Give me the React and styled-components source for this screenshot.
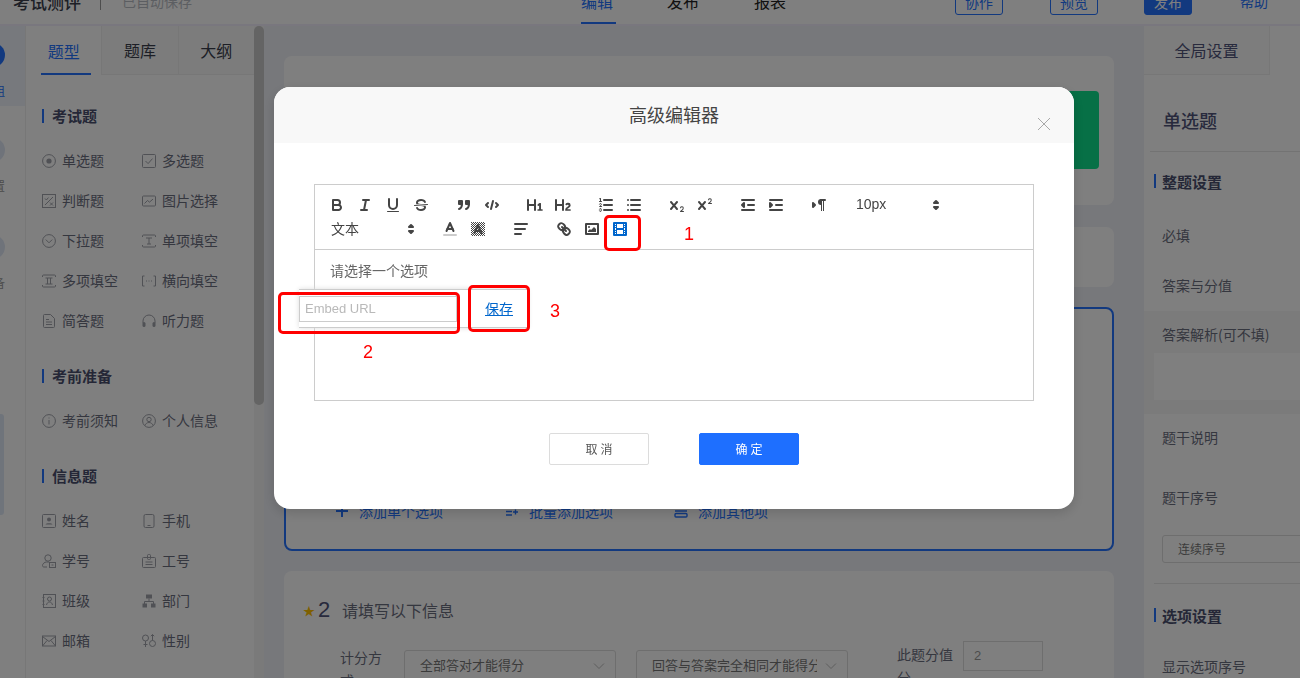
import React from 'react'
import styled, { createGlobalStyle } from 'styled-components'

const GlobalStyle = createGlobalStyle`
  html, body { margin: 0; padding: 0; height: 100%; overflow: hidden; background: #fff; }
  body { font-family: "Noto Sans CJK SC", "Liberation Sans", sans-serif; color: #333; }
  * { box-sizing: border-box; }
`

const CJK = `"Liberation Sans", "Noto Sans CJK SC", sans-serif`
const BLUE = '#2473ff'

const Page = styled.div`
  width: 1300px;
  height: 678px;
  overflow: hidden;
  display: flex;
  flex-direction: column;
`

/* the page is scrolled a bit: the header is cut by the top of the window */
const Header = styled.header`
  flex: none;
  height: 26px;
  border-bottom: 2px solid #f2eefc;
  background: #fff;
  overflow: hidden;
`
const HeaderInner = styled.div`
  margin-top: -18px;
  height: 42px;
  padding-left: 13px;
  display: flex;
  align-items: center;
`
const AppTitle = styled.div`
  font-size: 17px;
  font-weight: 500;
  color: #3b3f4d;
  width: 87px;
  padding-bottom: 4px;
`
const HeaderSep = styled.div`
  width: 1px;
  height: 18px;
  margin-bottom: 4px;
  background: #9a9a9a;
`
const Saved = styled.div`
  margin-left: 21px;
  font-size: 14px;
  color: #b9bcc4;
  width: 459px;
  padding-bottom: 4px;
`
const HeaderTab = styled.div`
  height: 42px;
  width: ${p => p.$w}px;
  font-size: 16px;
  color: ${p => (p.$active ? BLUE : '#222')};
  div {
    width: 35px;
    height: 42px;
    line-height: 38px;
    border-bottom: ${p => (p.$active ? `2px solid ${BLUE}` : 'none')};
  }
`
const HeaderActions = styled.div`
  display: flex;
  align-items: flex-start;
  height: 42px;
`
const HeadBtn = styled.div`
  width: 48px;
  height: 33px;
  margin-right: ${p => p.$mr}px;
  border: 1px solid ${BLUE};
  border-radius: 3px;
  background: ${p => (p.$primary ? BLUE : '#fff')};
  color: ${p => (p.$primary ? '#fff' : BLUE)};
  font-size: 14px;
  text-align: center;
  line-height: 38px;
`
const HelpLink = styled.div`
  font-size: 14px;
  line-height: 38px;
  color: ${BLUE};
`

const Main = styled.div`
  flex: 1;
  min-height: 0;
  display: flex;
`

const Rail = styled.aside`
  flex: none;
  width: 26px;
  overflow: hidden;
  background: #fff;
  border-right: 1px solid #eee;
  position: relative;
`
const RailItem = styled.div`
  width: 26px;
  height: ${p => p.$h}px;
  background: ${p => (p.$active ? '#eef3fb' : 'transparent')};
  overflow: hidden;
`
const RailInner = styled.div`
  width: 68px;
  margin-left: -41px;
  padding-top: ${p => p.$pt}px;
  display: flex;
  flex-direction: column;
  align-items: center;
  gap: 16px;
`
const RailCircle = styled.div`
  width: 24px;
  height: 24px;
  border-radius: 50%;
  flex: none;
  background: ${p => (p.$active ? BLUE : '#dfe7f5')};
`
const RailLabel = styled.div`
  font-size: 12px;
  line-height: 16px;
  color: ${p => (p.$active ? BLUE : '#999')};
`
const RailStub = styled.div`
  position: absolute;
  left: 0;
  top: 388px;
  width: 4px;
  height: 101px;
  background: #dfe9f7;
  border-radius: 0 3px 3px 0;
`

const LeftPanel = styled.aside`
  flex: none;
  width: 238px;
  display: flex;
  background: #fff;
`
const LeftCol = styled.div`
  width: 228px;
`
const TabBar = styled.div`
  display: flex;
  height: 49px;
  background: #f9f9f9;
`
const LeftTab = styled.div`
  flex: 1;
  height: 49px;
  display: flex;
  align-items: center;
  justify-content: center;
  font-size: 16px;
  background: ${p => (p.$active ? '#fff' : '#f9f9f9')};
  color: ${p => (p.$active ? BLUE : '#3b3f4d')};
  border-right: 1px solid #eee;
  border-bottom: ${p => (p.$active ? 'none' : '1px solid #eee')};
  position: relative;
  &:last-child { border-right: none; }
  &::after {
    content: '';
    display: ${p => (p.$active ? 'block' : 'none')};
    position: absolute;
    left: 15px;
    right: 10px;
    bottom: 0;
    height: 2px;
    background: ${BLUE};
  }
`
const LeftBody = styled.div`
  padding: 31px 0 0 16px;
`
const SectionHead = styled.div`
  height: 20px;
  display: flex;
  align-items: center;
  font-size: 15px;
  font-weight: 700;
  color: #4a4f6e;
  margin: ${p => p.$m || '0'};
  &::before {
    content: '';
    width: 2px;
    height: 14px;
    background: ${BLUE};
    margin-right: 8px;
  }
  span { padding-bottom: 2px; }
`
const ItemGrid = styled.div`
  display: grid;
  grid-template-columns: 100px 100px;
  grid-auto-rows: 40px;
  margin: 15px 0 25px;
`
const Item = styled.div`
  display: flex;
  align-items: center;
  gap: 6px;
  font-size: 14px;
  color: #6b6e7e;
  svg { flex: none; color: #a0a2aa; }
  span { padding-bottom: 2px; }
`
const ScrollTrack = styled.div`
  width: 10px;
  background: #f4f4f4;
`
const ScrollThumb = styled.div`
  width: 10px;
  height: 379px;
  border-radius: 5px;
  background: #c8c8c8;
`

const Canvas = styled.main`
  flex: none;
  width: 880px;
  background: #eff1f7;
  padding: 30px 30px 0 20px;
  display: flex;
  flex-direction: column;
  overflow: hidden;
`
const Card = styled.section`
  flex: none;
  width: 830px;
  height: ${p => p.$h}px;
  margin-bottom: ${p => p.$mb}px;
  background: #fff;
  border-radius: 8px;
  position: relative;
`
const GreenTab = styled.div`
  position: absolute;
  right: 15px;
  top: 35px;
  width: 60px;
  height: 78px;
  border-radius: 4px;
  background: #0ee08c;
`
const ActiveCard = styled(Card)`
  border: 2px solid ${BLUE};
  display: flex;
  flex-direction: column;
  justify-content: flex-end;
  padding: 0 0 28px 49px;
`
const AddRow = styled.div`
  display: flex;
  align-items: center;
  height: 20px;
`
const AddAction = styled.div`
  width: ${p => p.$w}px;
  display: flex;
  align-items: center;
  gap: ${p => p.$gap}px;
  font-size: 14px;
  color: ${BLUE};
  svg { flex: none; }
`
const QuestionCard = styled(Card)`
  padding: 28px 0 0 19px;
`
const QuestionTitle = styled.div`
  display: flex;
  align-items: center;
  height: 24px;
  padding-bottom: 2px;
  font-size: 16px;
  color: #6b6e7e;
`
const Star = styled.span`
  color: #ffc000;
  font-size: 12px;
  width: 15px;
`
const QuestionNo = styled.span`
  font-family: ${CJK};
  font-size: 22px;
  color: #50547a;
  width: 24px;
`
const ScoreRow = styled.div`
  margin-top: 27px;
  padding-left: 37px;
  display: flex;
  align-items: flex-start;
`
const ScoreLabel = styled.div`
  width: ${p => p.$w}px;
  margin-right: ${p => p.$mr || 0}px;
  margin-left: ${p => p.$ml || 0}px;
  margin-top: ${p => p.$mt || 0}px;
  font-size: 14px;
  line-height: 23px;
  color: #6b6e7e;
`
const FakeSelect = styled.div`
  width: 212px;
  height: 32px;
  margin-right: 20px;
  border: 1px solid #dcdcdc;
  border-radius: 3px;
  display: flex;
  align-items: center;
  justify-content: space-between;
  padding: 0 10px 0 15px;
  font-size: 13px;
  color: #777;
  span {
    width: 165px;
    padding-bottom: 4px;
    overflow: hidden;
    white-space: nowrap;
  }
  svg { flex: none; color: #bbb; }
`
const ScoreField = styled.div`
  width: 80px;
  height: 30px;
  margin-left: 6px;
  margin-top: -9px;
  border: 1px solid #dcdcdc;
  padding: 0 10px;
  font-family: ${CJK};
  font-size: 13px;
  line-height: 28px;
  color: #999;
`

const RightPanel = styled.aside`
  flex: none;
  width: 156px;
  background: #fff;
  overflow: hidden;
`
const RightTab = styled.div`
  width: 126px;
  height: 49px;
  background: #fafafa;
  border-right: 1px solid #eee;
  border-bottom: 1px solid #eee;
  font-size: 16px;
  color: #50547a;
  display: flex;
  align-items: center;
  justify-content: center;
`
const RightTitle = styled.div`
  height: 77px;
  margin-left: 6px;
  padding: 14px 0 0 13px;
  display: flex;
  align-items: center;
  border-bottom: 1px solid #e6e6e6;
  font-size: 18px;
  font-weight: 500;
  color: #50547a;
`
const RightHead = styled(SectionHead)`
  margin: ${p => p.$m};
  padding-left: 10px;
  &::before { margin-right: 6px; }
`
const SettingRow = styled.div`
  height: ${p => p.$h}px;
  margin-top: ${p => p.$mt || 0}px;
  padding: 0 0 2px 18px;
  display: flex;
  align-items: center;
  font-size: 14px;
  color: #6b6e7e;
  white-space: nowrap;
`
const Highlight = styled.div`
  height: 103px;
  background: #f7f7f7;
  padding-top: 12px;
`
const HighlightField = styled.div`
  height: 47px;
  margin: 6px 0 0 10px;
  background: #fff;
`
const NumberSelect = styled.div`
  margin: 13px 0 0 18px;
  width: 170px;
  height: 28px;
  border: 1px solid #dcdcdc;
  border-radius: 3px;
  padding-left: 15px;
  font-size: 12px;
  line-height: 26px;
  color: #777;
`
const RightDivider = styled.div`
  height: 1px;
  margin: 20px 0 0 10px;
  background: #e6e6e6;
`

const Overlay = styled.div`
  position: fixed;
  inset: 0;
  background: rgba(0, 0, 0, 0.5);
  padding: 87px 0 0 274px;
`
const Modal = styled.div`
  width: 800px;
  height: 422px;
  background: #fff;
  border-radius: 16px;
  overflow: hidden;
  box-shadow: 0 4px 12px rgba(0, 0, 0, 0.15);
`
const ModalHeader = styled.div`
  height: 56px;
  padding-bottom: 2px;
  background: #f8f8f8;
  display: flex;
  align-items: center;
  justify-content: center;
  font-size: 18px;
  color: #444;
  position: relative;
`
const CloseBtn = styled.div`
  position: absolute;
  right: 22px;
  top: 24px;
  width: 16px;
  height: 16px;
  color: #a8a8a8;
`
const ModalBody = styled.div`
  padding: 41px 40px 0;
`
const Editor = styled.div`
  height: 217px;
  border: 1px solid #ccc;
  position: relative;
`
const Toolbar = styled.div`
  height: 65px;
  padding: 8px;
  display: flex;
  flex-wrap: wrap;
  align-content: flex-start;
  border-bottom: 1px solid #ccc;
`
const ToolGroup = styled.div`
  display: flex;
  margin-right: 15px;
`
const ToolBtn = styled.div`
  width: 28px;
  height: 24px;
  padding: 3px 5px;
  svg { display: block; }
`
const Picker = styled.div`
  width: 98px;
  height: 24px;
  padding-left: 8px;
  display: flex;
  align-items: center;
  justify-content: space-between;
  font-size: 14px;
  color: #444;
  font-family: ${CJK};
  span { padding-bottom: 2px; }
  svg { margin-right: 1px; }
`
const QlSvg = styled.svg`
  width: 18px;
  height: 18px;
  color: ${p => (p.$active ? '#06c' : '#444')};
  .s { fill: none; stroke: currentColor; stroke-width: 2; stroke-linecap: round; stroke-linejoin: round; }
  .t { fill: none; stroke: currentColor; stroke-width: 1; stroke-linecap: round; stroke-linejoin: round; }
  .f { fill: currentColor; }
`
const EditorText = styled.div`
  padding: 9px 15px;
  font-size: 14px;
  line-height: 22px;
  color: #666;
`
const LinkTooltip = styled.div`
  position: absolute;
  left: -16px;
  top: 104px;
  width: 229px;
  height: 39px;
  background: #fff;
  border-top: 1px solid #ccc;
  border-bottom: 1px solid #ccc;
  display: flex;
  align-items: center;
  box-shadow: 0 0 5px #ddd;
`
const UrlInput = styled.input`
  width: 158px;
  height: 26px;
  border: 1px solid #ccc;
  padding: 0 5px;
  outline: none;
  font-family: "Liberation Sans", sans-serif;
  font-size: 13px;
  &::placeholder { color: #b9b9b9; }
`
const SaveLink = styled.a`
  margin-left: 28px;
  margin-bottom: 2px;
  white-space: nowrap;
  font-size: 14px;
  line-height: 20px;
  color: #06c;
  text-decoration: underline;
`
const ModalFooter = styled.div`
  margin-top: 32px;
  display: flex;
  justify-content: center;
  gap: 50px;
`
const FootBtn = styled.button`
  width: 100px;
  height: 32px;
  border: 1px solid ${p => (p.$primary ? '#1e6fff' : '#dcdcdc')};
  border-radius: 2px;
  background: ${p => (p.$primary ? '#1e6fff' : '#fff')};
  color: ${p => (p.$primary ? '#fff' : '#555')};
  font-family: inherit;
  font-size: 12px;
  letter-spacing: 3px;
  padding: 0 0 2px 3px;
`
const Marker = styled.div`
  position: absolute;
  left: ${p => p.$x}px;
  top: ${p => p.$y}px;
  width: ${p => p.$w}px;
  height: ${p => p.$h}px;
  border: 3px solid #f00;
  border-radius: 5px;
`
const MarkerNo = styled.div`
  position: absolute;
  left: ${p => p.$x}px;
  top: ${p => p.$y}px;
  font-family: "Liberation Sans", sans-serif;
  font-size: 18px;
  line-height: 20px;
  color: #f00;
`

const Icon14 = ({ children }) => (
  <svg width="14" height="14" viewBox="0 0 14 14" fill="none" stroke="currentColor" strokeWidth="1">
    {children}
  </svg>
)

const listIcons = {
  radio: <><circle cx="7" cy="7" r="6.4" /><circle cx="7" cy="7" r="2.6" fill="currentColor" stroke="none" /></>,
  check: <><rect x=".5" y=".5" width="13" height="13" rx="1" /><path d="M3.5 7l2.6 2.6 4.4-5" /></>,
  judge: <><rect x=".5" y=".5" width="13" height="13" /><path d="M3 11L11 3M3 4.5l1.4 1.5 2-2.4M8 8.5l3 3M11 8.5l-3 3" /></>,
  image: <><rect x=".5" y="2" width="13" height="10" rx="1" /><path d="M2.5 9.5l3-3 2 1.6 3.5-3" /></>,
  drop: <><circle cx="7" cy="7" r="6.4" /><path d="M3.8 5.6L7 8.8l3.2-3.2" /></>,
  single: <path d="M.5 3V2a1 1 0 0 1 1-1h11a1 1 0 0 1 1 1v1M.5 11v1a1 1 0 0 0 1 1h11a1 1 0 0 0 1-1v-1M4 4h6M7 4v6M5 10h4" />,
  multi: <path d="M.5 3V2a1 1 0 0 1 1-1h11a1 1 0 0 1 1 1v1M.5 11v1a1 1 0 0 0 1 1h11a1 1 0 0 0 1-1v-1M3.5 4h7M5.5 4v6M8.5 4v6M3.5 10h7" />,
  inline: <path d="M2.5 2H.5v10h2M11.5 2h2v10h-2M4 7h1M6.5 7h1M9 7h1" />,
  doc: <><path d="M1.5 1.5a1 1 0 0 1 1-1H8.5l4 4v8a1 1 0 0 1-1 1h-9a1 1 0 0 1-1-1z" /><path d="M4 5.5h3M4 8h6M4 10.5h6" /></>,
  audio: <><path d="M1 9V7a6 6 0 0 1 12 0v2" /><rect x=".5" y="8" width="3" height="5" rx="1.5" fill="currentColor" stroke="none" /><rect x="10.5" y="8" width="3" height="5" rx="1.5" fill="currentColor" stroke="none" /></>,
  info: <><circle cx="7" cy="7" r="6.4" /><path d="M7 6v4.500M7 3.5v1" /></>,
  person: <><circle cx="7" cy="7" r="6.4" /><circle cx="7" cy="5.5" r="2.2" /><path d="M3 11.5c.6-2 2.2-3 4-3s3.400 1 4 3" /></>,
  name: <><rect x=".5" y=".5" width="13" height="13" rx="1" /><circle cx="7" cy="5.5" r="2" fill="currentColor" stroke="none" /><path d="M3.5 10.5c.3-1.800 6.700-1.800 7 0z" fill="currentColor" stroke="none" /></>,
  phone: <><rect x="2" y=".5" width="10" height="13" rx="1.5" /><path d="M5.5 11.5h3" /></>,
  student: <><circle cx="6" cy="4" r="3.2" /><path d="M7 8H4.5C2.5 8 .5 9.800.5 11.500c0 1 .6 1.500 1.500 1.500h3" /><rect x="7.5" y="8.5" width="6" height="5" /><path d="M9.5 11h2" /></>,
  staff: <><rect x=".5" y="3.5" width="13" height="10" rx="1" /><rect x="5.5" y=".5" width="3" height="5" rx="1" /><path d="M3.5 8h7M3.5 10.5h7" /></>,
  cls: <><rect x="1.5" y=".5" width="12" height="13" /><circle cx="7.5" cy="5" r="2" /><path d="M4.5 11c.5-2 1.500-3 3-3s2.500 1 3 3M.5 3.500h2M.5 7h2M.5 10.500h2" /></>,
  dept: <><path d="M4 .5h6v4H4z" fill="currentColor" stroke="none" /><path d="M7 4.500V7M2.500 10V7.500h9V10" /><path d="M.5 9.500h4.500v4H.5zM9 9.500h4.500v4H9z" fill="currentColor" stroke="none" /></>,
  mail: <><rect x=".5" y="2" width="13" height="10" /><path d="M.5 2.500L7 7.500l6.500-5M.5 12l4.500-5.500M13.500 12L9 6.500" /></>,
  gender: <><circle cx="3.5" cy="4" r="3" /><path d="M3.500 7v6M1.500 10.500h4" /><circle cx="10.5" cy="9.5" r="3" /><path d="M10.500 6.500V.5M8.800 2.200L10.500.5l1.700 1.700" /></>,
}

const sections = [
  {
    title: '考试题',
    items: [
      ['radio', '单选题'], ['check', '多选题'], ['judge', '判断题'], ['image', '图片选择'], ['drop', '下拉题'],
      ['single', '单项填空'], ['multi', '多项填空'], ['inline', '横向填空'], ['doc', '简答题'], ['audio', '听力题'],
    ],
  },
  { title: '考前准备', items: [['info', '考前须知'], ['person', '个人信息']] },
  {
    title: '信息题',
    items: [
      ['name', '姓名'], ['phone', '手机'], ['student', '学号'], ['staff', '工号'],
      ['cls', '班级'], ['dept', '部门'], ['mail', '邮箱'], ['gender', '性别'],
    ],
  },
]

// toolbar drawings, 18x18 grid
const toolIcons = {
  bold: <><path className="s" d="M5,4H9.5A2.5,2.5,0,0,1,12,6.5v0A2.5,2.5,0,0,1,9.5,9H5A0,0,0,0,1,5,9V4A0,0,0,0,1,5,4Z" /><path className="s" d="M5,9h5.5A2.5,2.5,0,0,1,13,11.5v0A2.5,2.5,0,0,1,10.5,14H5a0,0,0,0,1,0,0V9A0,0,0,0,1,5,9Z" /></>,
  italic: <><line className="s" x1="7" x2="13" y1="4" y2="4" /><line className="s" x1="5" x2="11" y1="14" y2="14" /><line className="s" x1="8" x2="10" y1="14" y2="4" /></>,
  underline: <><path className="s" d="M5,3V9a4.012,4.012,0,0,0,4,4H9a4.012,4.012,0,0,0,4-4V3" /><rect className="f" height="1" rx=".5" ry=".5" width="12" x="3" y="15" /></>,
  strike: <><line className="t" x1="15.5" x2="2.5" y1="8.5" y2="9.5" /><path className="f" d="M9.007,8C6.542,7.791,6,7.519,6,6.5,6,5.792,7.283,5,9,5c1.571,0,2.765.679,2.969,1.309a1,1,0,0,0,1.9-.617C13.356,4.106,11.354,3,9,3,6.2,3,4,4.538,4,6.5a3.2,3.2,0,0,0,.5,1.843Z" /><path className="f" d="M8.984,10C11.457,10.208,12,10.479,12,11.5c0,.708-1.283,1.5-3,1.5-1.571,0-2.765-.679-2.969-1.309a1,1,0,1,0-1.9.617C4.644,13.894,6.646,15,9,15c2.8,0,5-1.538,5-3.5a3.2,3.2,0,0,0-.5-1.843Z" /></>,
  quote: <><rect className="f s" height="3" width="3" x="4" y="5" /><rect className="f s" height="3" width="3" x="11" y="5" /><path className="s" d="M7,8c0,4.031-3,5-3,5" /><path className="s" d="M14,8c0,4.031-3,5-3,5" /></>,
  code: <><polyline className="s" points="5 7 3 9 5 11" /><polyline className="s" points="13 7 15 9 13 11" /><line className="s" x1="10" x2="8" y1="5" y2="13" /></>,
  h1: <path className="f" d="M10,4V14a1,1,0,0,1-2,0V10H3v4a1,1,0,0,1-2,0V4A1,1,0,0,1,3,4V8H8V4a1,1,0,0,1,2,0Zm6.06787,9.209H14.98975V7.59863a.54085.54085,0,0,0-.605-.60547h-.62744a1.01119,1.01119,0,0,0-.748.29688L11.645,8.56641a.5435.5435,0,0,0-.022.8584l.28613.30762a.53861.53861,0,0,0,.84717.0332l.09912-.08789a1.2137,1.2137,0,0,0,.2417-.35254h.02246s-.01123.30859-.01123.60547V13.209H12.041a.54085.54085,0,0,0-.605.60547v.43945a.54085.54085,0,0,0,.605.60547h4.02686a.54085.54085,0,0,0,.605-.60547v-.43945A.54085.54085,0,0,0,16.06787,13.209Z" />,
  h2: <path className="f" d="M16.73975,13.81445v.43945a.54085.54085,0,0,1-.605.60547H11.855a.58392.58392,0,0,1-.64893-.60547V14.0127c0-2.90527,3.39941-3.42187,3.39941-4.55469a.77675.77675,0,0,0-.84717-.78125,1.17684,1.17684,0,0,0-.83594.38477c-.2749.26367-.561.374-.85791.13184l-.4292-.34082c-.30811-.24219-.38525-.51758-.1543-.81445a2.97155,2.97155,0,0,1,2.45361-1.17676,2.45393,2.45393,0,0,1,2.68408,2.40918c0,2.45312-3.1792,2.92676-3.27832,3.93848h2.79443A.54085.54085,0,0,1,16.73975,13.81445ZM9,3A.99974.99974,0,0,0,8,4V8H3V4A1,1,0,0,0,1,4V14a1,1,0,0,0,2,0V10H8v4a1,1,0,0,0,2,0V4A.99974.99974,0,0,0,9,3Z" />,
  ol: <><line className="s" x1="7" x2="15" y1="4" y2="4" /><line className="s" x1="7" x2="15" y1="9" y2="9" /><line className="s" x1="7" x2="15" y1="14" y2="14" /><line className="t" x1="2.5" x2="4.5" y1="5.5" y2="5.5" /><path className="f" d="M3.5,6A0.5,0.5,0,0,1,3,5.5V3.085l-0.276.138A0.5,0.5,0,0,1,2.053,3c-0.124-.247-0.023-0.324.224-0.447l1-.5A0.5,0.5,0,0,1,4,2.5v3A0.5,0.5,0,0,1,3.5,6Z" /><path className="t" d="M4.5,10.5h-2c0-.234,1.85-1.076,1.85-2.234A0.959,0.959,0,0,0,2.5,8.156" /><path className="t" d="M2.5,14.846a0.959,0.959,0,0,0,1.85-.109A0.7,0.7,0,0,0,3.75,14a0.688,0.688,0,0,0,.6-0.736,0.959,0.959,0,0,0-1.85-.109" /></>,
  ul: <><line className="s" x1="6" x2="15" y1="4" y2="4" /><line className="s" x1="6" x2="15" y1="9" y2="9" /><line className="s" x1="6" x2="15" y1="14" y2="14" /><line className="s" x1="3" x2="3" y1="4" y2="4" /><line className="s" x1="3" x2="3" y1="9" y2="9" /><line className="s" x1="3" x2="3" y1="14" y2="14" /></>,
  sub: <><path className="f" d="M15.5,15H13.861a3.858,3.858,0,0,0,1.914-2.975,1.8,1.8,0,0,0-1.6-1.751A1.921,1.921,0,0,0,12.021,11.7a0.50013,0.50013,0,1,0,.957.291h0a0.914,0.914,0,0,1,1.053-.725,0.81,0.81,0,0,1,.744.762c0,1.076-1.16971,1.86982-1.93971,2.43082A1.45639,1.45639,0,0,0,12,15.5a0.5,0.5,0,0,0,.5.5h3A0.5,0.5,0,0,0,15.5,15Z" /><path className="f" d="M9.65,5.241a1,1,0,0,0-1.409.108L6,7.964,3.759,5.349A1,1,0,0,0,2.192,6.59178Q2.21541,6.6213,2.241,6.649L4.684,9.5,2.241,12.35A1,1,0,0,0,3.71,13.70722q0.02557-.02768.049-0.05722L6,11.036,8.241,13.65a1,1,0,1,0,1.567-1.24277Q9.78459,12.3777,9.759,12.35L7.316,9.5,9.759,6.651A1,1,0,0,0,9.65,5.241Z" /></>,
  sup: <><path className="f" d="M15.5,7H13.861a4.015,4.015,0,0,0,1.914-2.975,1.8,1.8,0,0,0-1.6-1.751A1.922,1.922,0,0,0,12.021,3.7a0.5,0.5,0,1,0,.957.291,0.917,0.917,0,0,1,1.053-.725,0.81,0.81,0,0,1,.744.762c0,1.077-1.164,1.925-1.934,2.486A1.423,1.423,0,0,0,12,7.5a0.5,0.5,0,0,0,.5.5h3A0.5,0.5,0,0,0,15.5,7Z" /><path className="f" d="M9.651,5.241a1,1,0,0,0-1.41.108L6,7.964,3.759,5.349a1,1,0,1,0-1.519,1.3L4.683,9.5,2.241,12.35a1,1,0,1,0,1.519,1.3L6,11.036,8.241,13.65a1,1,0,0,0,1.519-1.3L7.317,9.5,9.759,6.651A1,1,0,0,0,9.651,5.241Z" /></>,
  outdent: <><line className="s" x1="3" x2="15" y1="14" y2="14" /><line className="s" x1="3" x2="15" y1="4" y2="4" /><line className="s" x1="9" x2="15" y1="9" y2="9" /><polyline className="f s" points="5 7 5 11 3 9 5 7" /></>,
  indent: <><line className="s" x1="3" x2="15" y1="14" y2="14" /><line className="s" x1="3" x2="15" y1="4" y2="4" /><line className="s" x1="9" x2="15" y1="9" y2="9" /><polyline className="f s" points="3 7 3 11 5 9 3 7" /></>,
  dir: <><polygon className="f s" points="3 11 5 9 3 7 3 11" /><line className="s" x1="15" x2="11" y1="4" y2="4" /><path className="f" d="M11,3a3,3,0,0,0,0,6h1V3H11Z" /><rect className="f" height="11" width="1" x="11" y="4" /><rect className="f" height="11" width="1" x="13" y="4" /></>,
  color: <><line x1="3" x2="15" y1="15" y2="15" stroke="#ccc" strokeWidth="2" strokeLinecap="round" /><polyline className="s" points="5.5 11 9 3 12.5 11" /><line className="s" x1="11.63" x2="6.38" y1="9" y2="9" /></>,
  background: <><defs><pattern id="dither" width="2" height="2" patternUnits="userSpaceOnUse"><rect width="1" height="1" fill="#444" /><rect x="1" y="1" width="1" height="1" fill="#444" /></pattern></defs><rect x="2" y="2" width="14" height="14" fill="url(#dither)" /><polyline className="s" points="5.5 13 9 5 12.5 13" /><line className="s" x1="11.63" x2="6.38" y1="11" y2="11" /></>,
  align: <><line className="s" x1="3" x2="15" y1="4" y2="4" /><line className="s" x1="3" x2="13" y1="9" y2="9" /><line className="s" x1="3" x2="9" y1="14" y2="14" /></>,
  link: <><line className="s" x1="7" x2="11" y1="7" y2="11" /><path className="s" d="M8.9,4.577a3.476,3.476,0,0,1,.36,4.679A3.476,3.476,0,0,1,4.577,8.9C3.185,7.5,2.035,6.4,4.217,4.217S7.5,3.185,8.9,4.577Z" /><path className="s" d="M13.423,9.1a3.476,3.476,0,0,0-4.679-.36,3.476,3.476,0,0,0,.36,4.679c1.392,1.392,2.5,2.542,4.679.36S14.815,10.5,13.423,9.1Z" /></>,
  image: <><rect className="s" height="10" width="12" x="3" y="4" /><circle className="f" cx="6" cy="7" r="1" /><polyline className="f" points="5 12 5 11 7 9 8 10 11 7 13 9 13 12 5 12" /></>,
  video: <><rect className="s" height="12" width="12" x="3" y="3" /><rect className="f" height="12" width="1" x="5" y="3" /><rect className="f" height="12" width="1" x="12" y="3" /><rect className="f" height="2" width="8" x="5" y="8" /><rect className="f" height="1" width="3" x="3" y="5" /><rect className="f" height="1" width="3" x="3" y="7" /><rect className="f" height="1" width="3" x="3" y="10" /><rect className="f" height="1" width="3" x="3" y="12" /><rect className="f" height="1" width="3" x="12" y="5" /><rect className="f" height="1" width="3" x="12" y="7" /><rect className="f" height="1" width="3" x="12" y="10" /><rect className="f" height="1" width="3" x="12" y="12" /></>,
}

const Tool = ({ name, active }) => (
  <ToolBtn>
    <QlSvg viewBox="0 0 18 18" $active={active}>{toolIcons[name]}</QlSvg>
  </ToolBtn>
)

const PickerArrows = () => (
  <QlSvg viewBox="0 0 18 18">
    <polygon className="f s" points="7 11 9 13 11 11 7 11" />
    <polygon className="f s" points="7 7 9 5 11 7 7 7" />
  </QlSvg>
)

const Chevron = () => (
  <svg width="12" height="12" viewBox="0 0 12 12" fill="none" stroke="currentColor">
    <path d="M1 3.5l5 5 5-5" />
  </svg>
)

const toolGroups = [
  ['bold', 'italic', 'underline', 'strike'],
  ['quote', 'code'],
  ['h1', 'h2'],
  ['ol', 'ul'],
  ['sub', 'sup'],
  ['outdent', 'indent'],
  ['dir'],
  'size',
  'font',
  ['color', 'background'],
  ['align'],
  ['link', 'image', 'video'],
]

function EditorToolbar() {
  return (
    <Toolbar>
      {toolGroups.map((group, i) => {
        if (group === 'size' || group === 'font') {
          return (
            <ToolGroup key={i}>
              <Picker>
                <span>{group === 'size' ? '10px' : '文本'}</span>
                <PickerArrows />
              </Picker>
            </ToolGroup>
          )
        }
        return (
          <ToolGroup key={i}>
            {group.map(name => <Tool key={name} name={name} active={name === 'video'} />)}
          </ToolGroup>
        )
      })}
    </Toolbar>
  )
}

function Sidebar() {
  return (
    <LeftPanel>
      <LeftCol>
        <TabBar>
          <LeftTab $active>题型</LeftTab>
          <LeftTab>题库</LeftTab>
          <LeftTab>大纲</LeftTab>
        </TabBar>
        <LeftBody>
          {sections.map(section => (
            <div key={section.title}>
              <SectionHead><span>{section.title}</span></SectionHead>
              <ItemGrid>
                {section.items.map(([icon, label]) => (
                  <Item key={label}>
                    <Icon14>{listIcons[icon]}</Icon14>
                    <span>{label}</span>
                  </Item>
                ))}
              </ItemGrid>
            </div>
          ))}
        </LeftBody>
      </LeftCol>
      <ScrollTrack><ScrollThumb /></ScrollTrack>
    </LeftPanel>
  )
}

function Workspace() {
  return (
    <Canvas>
      <Card $h={149} $mb={22}><GreenTab /></Card>
      <Card $h={60} $mb={20} />
      <ActiveCard $h={244} $mb={20}>
        <AddRow>
          <AddAction $w={170} $gap={10}>
            <svg width="14" height="14" viewBox="0 0 14 14" stroke="currentColor" strokeWidth="2"><path d="M7 1v12M1 7h12" /></svg>
            添加单个选项
          </AddAction>
          <AddAction $w={169} $gap={10}>
            <svg width="14" height="14" viewBox="0 0 14 14" stroke="currentColor" strokeWidth="1.4"><path d="M1 4h6M1 7.5h6M1 11h6M8 8h5M10.5 5.5v5" /></svg>
            批量添加选项
          </AddAction>
          <AddAction $w={170} $gap={10}>
            <svg width="14" height="14" viewBox="0 0 14 14" fill="none" stroke="currentColor" strokeWidth="1.4"><path d="M1 3h12M1 7h12" /><rect x="1" y="9.5" width="12" height="3.5" rx="1" /></svg>
            添加其他项
          </AddAction>
        </AddRow>
      </ActiveCard>
      <QuestionCard $h={300} $mb={0}>
        <QuestionTitle>
          <Star>★</Star>
          <QuestionNo>2</QuestionNo>
          请填写以下信息
        </QuestionTitle>
        <ScoreRow>
          <ScoreLabel $w={50} $mr={14} $mt={-4}>计分方式</ScoreLabel>
          <FakeSelect><span>全部答对才能得分</span><Chevron /></FakeSelect>
          <FakeSelect><span>回答与答案完全相同才能得分</span><Chevron /></FakeSelect>
          <ScoreLabel $w={60} $ml={29} $mt={-7}>此题分值分</ScoreLabel>
          <ScoreField>2</ScoreField>
        </ScoreRow>
      </QuestionCard>
    </Canvas>
  )
}

function SettingsPanel() {
  return (
    <RightPanel>
      <RightTab>全局设置</RightTab>
      <RightTitle>单选题</RightTitle>
      <RightHead $m="19px 0 0">整题设置</RightHead>
      <SettingRow $h={50} $mt={20}>必填</SettingRow>
      <SettingRow $h={50}>答案与分值</SettingRow>
      <Highlight>
        <SettingRow $h={24}>答案解析(可不填)</SettingRow>
        <HighlightField />
      </Highlight>
      <SettingRow $h={48}>题干说明</SettingRow>
      <SettingRow $h={48} $mt={12}>题干序号</SettingRow>
      <NumberSelect>连续序号</NumberSelect>
      <RightDivider />
      <RightHead $m="21px 0 0">选项设置</RightHead>
      <SettingRow $h={48} $mt={18}>显示选项序号</SettingRow>
    </RightPanel>
  )
}

export default function App() {
  return (
    <>
      <GlobalStyle />
      <Page>
        <Header>
          <HeaderInner>
            <AppTitle>考试测评</AppTitle>
            <HeaderSep />
            <Saved>已自动保存</Saved>
            <HeaderTab $w={86} $active><div>编辑</div></HeaderTab>
            <HeaderTab $w={87}><div>发布</div></HeaderTab>
            <HeaderTab $w={201}><div>报表</div></HeaderTab>
            <HeaderActions>
              <HeadBtn $mr={47}>协作</HeadBtn>
              <HeadBtn $mr={46}>预览</HeadBtn>
              <HeadBtn $mr={48} $primary>发布</HeadBtn>
              <HelpLink>帮助</HelpLink>
            </HeaderActions>
          </HeaderInner>
        </Header>
        <Main>
          <Rail>
            <RailItem $h={80} $active>
              <RailInner $pt={17}>
                <RailCircle $active />
                <RailLabel $active>题组</RailLabel>
              </RailInner>
            </RailItem>
            <RailItem $h={100}>
              <RailInner $pt={32}>
                <RailCircle />
                <RailLabel>设置</RailLabel>
              </RailInner>
            </RailItem>
            <RailItem $h={100}>
              <RailInner $pt={29}>
                <RailCircle />
                <RailLabel>准备</RailLabel>
              </RailInner>
            </RailItem>
            <RailStub />
          </Rail>
          <Sidebar />
          <Workspace />
          <SettingsPanel />
        </Main>
      </Page>
      <Overlay>
        <Modal>
          <ModalHeader>
            高级编辑器
            <CloseBtn>
              <svg width="16" height="16" viewBox="0 0 16 16" stroke="currentColor"><path d="M2 2l12 12M14 2L2 14" /></svg>
            </CloseBtn>
          </ModalHeader>
          <ModalBody>
            <Editor>
              <EditorToolbar />
              <EditorText>请选择一个选项</EditorText>
              <LinkTooltip>
                <UrlInput placeholder="Embed URL" />
                <SaveLink>保存</SaveLink>
              </LinkTooltip>
              <Marker $x={289} $y={30} $w={37} $h={36} />
              <Marker $x={-37} $y={107} $w={182} $h={42} />
              <Marker $x={153} $y={100} $w={62} $h={47} />
              <MarkerNo $x={369} $y={39}>1</MarkerNo>
              <MarkerNo $x={48} $y={157}>2</MarkerNo>
              <MarkerNo $x={235} $y={116}>3</MarkerNo>
            </Editor>
            <ModalFooter>
              <FootBtn>取消</FootBtn>
              <FootBtn $primary>确定</FootBtn>
            </ModalFooter>
          </ModalBody>
        </Modal>
      </Overlay>
    </>
  )
}
